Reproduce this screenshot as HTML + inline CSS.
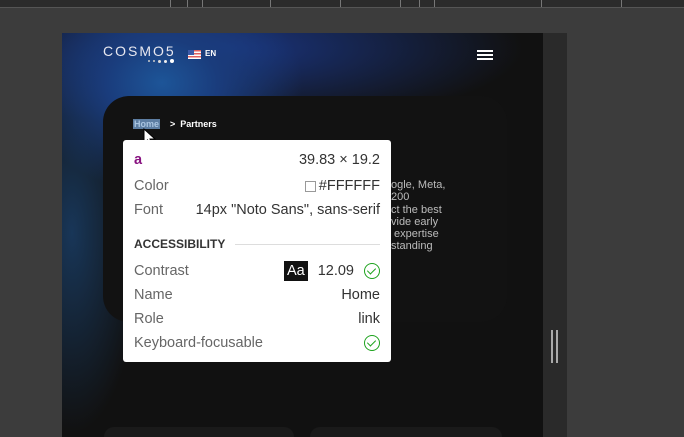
<!DOCTYPE html>
<html><head><style>
*{margin:0;padding:0;box-sizing:border-box}
body{width:684px;height:437px;background:#3c3c3c;position:relative;overflow:hidden;font-family:"Liberation Sans",sans-serif}
.top{position:absolute;left:0;top:0;width:684px;height:8px;background:#2b2b2b;border-bottom:1px solid #555}
.tick{position:absolute;top:0;width:1px;height:7px;background:#777}
.vp{position:absolute;left:62px;top:33px;width:481px;height:404px;background:#111;overflow:hidden}
.glow{position:absolute;left:0;top:0;width:481px;height:404px;background:radial-gradient(ellipse 140px 110px at 100px 50px,#1d5598 0%,#1a3c7c 40%,rgba(17,17,40,0) 100%),radial-gradient(ellipse 300px 80px at 160px 15px,#1a3580,rgba(17,17,30,0) 100%),radial-gradient(ellipse 70px 200px at 10px 200px,#183658,rgba(17,17,17,0) 100%)}
.scroll{position:absolute;left:543px;top:33px;width:24px;height:404px;background:#2a2a2a}
.card{position:absolute;left:41px;top:63px;width:404px;height:226px;background:#121212;border-radius:26px}
.bc{position:absolute;left:71px;top:86px;font-size:9px;color:#fff;font-weight:bold}
.bc .h{background:#5d7ea3;color:#a9c4e0;padding:0 1px}
.txt{position:absolute;left:329px;top:146px;font-size:11px;line-height:12.3px;color:#bbb;white-space:pre}
.tip{position:absolute;left:123px;top:140px;width:268px;height:222px;background:#fff;border-radius:3px;font-family:"Liberation Sans",sans-serif;color:#666;font-size:14.5px}
.r{position:absolute;left:11px;right:11px;display:flex;justify-content:space-between;align-items:center;height:20px}
.chk{width:16px;height:16px;border:1.5px solid #1ea31e;border-radius:50%;position:relative}
.chk:after{content:"";position:absolute;left:4px;top:2px;width:4px;height:7px;border:solid #1ea31e;border-width:0 1.5px 1.5px 0;transform:rotate(45deg)}
.bot{position:absolute;top:394px;height:20px;background:#1a1a1a;border-radius:10px}
</style></head><body>
<div class="top"><div class="tick" style="left:170px"></div><div class="tick" style="left:187px"></div><div class="tick" style="left:202px"></div><div class="tick" style="left:270px"></div><div class="tick" style="left:340px"></div><div class="tick" style="left:400px"></div><div class="tick" style="left:419px"></div><div class="tick" style="left:434px"></div><div class="tick" style="left:541px"></div><div class="tick" style="left:621px"></div></div>
<div class="vp"><div class="glow"></div>
<div style="position:absolute;left:41px;top:10px;color:#e8e8f0;font-size:14px;letter-spacing:2px">COSMO5</div>
<div style="position:absolute;left:86px;top:26px;width:28px;height:4px;display:flex;gap:3px;align-items:center"><i style="width:2px;height:2px;background:#ccc;border-radius:50%"></i><i style="width:2px;height:2px;background:#ccc;border-radius:50%"></i><i style="width:3px;height:3px;background:#ddd;border-radius:50%"></i><i style="width:3px;height:3px;background:#eee;border-radius:50%"></i><i style="width:4px;height:4px;background:#fff;border-radius:50%"></i></div>
<div style="position:absolute;left:126px;top:17px;width:13px;height:9px;background:repeating-linear-gradient(#e06060 0 1.5px,#fff 1.5px 3px)"><div style="width:6px;height:5px;background:#3c5aa8"></div></div>
<div style="position:absolute;left:143px;top:16px;color:#fff;font-size:8px;font-weight:bold">EN</div>
<div style="position:absolute;left:415px;top:17px;width:16px"><div style="height:2px;background:#fff;margin-bottom:2px"></div><div style="height:2px;background:#fff;margin-bottom:2px"></div><div style="height:2px;background:#fff"></div></div>
<div class="card"></div>
<div class="bc"><span class="h">Home</span>&nbsp;&nbsp;&nbsp;&nbsp;&gt;&nbsp;&nbsp;Partners</div>
<div class="txt">ogle, Meta,
200
ct the best
vide early
 expertise
standing</div>
<div class="bot" style="left:42px;width:190px"></div><div class="bot" style="left:248px;width:192px"></div>
</div>
<div class="scroll"><div style="position:absolute;left:8px;top:297px;width:2px;height:33px;background:#aaa"></div><div style="position:absolute;left:13px;top:297px;width:2px;height:33px;background:#aaa"></div></div>
<svg style="position:absolute;left:143px;top:128px" width="14" height="20"><path d="M1 1 L1 15 L4.5 12 L7 18 L9.5 17 L7 11 L12 11 Z" fill="#fff" stroke="#000" stroke-width="1"/></svg>
<div class="tip">
<div class="r" style="top:10px"><span style="color:#881280;font-weight:bold">a</span><span style="color:#333">39.83 × 19.2</span></div>
<div class="r" style="top:36px"><span>Color</span><span style="color:#333;display:flex;align-items:center"><i style="width:11px;height:11px;border:1px solid #999;margin-right:3px"></i>#FFFFFF</span></div>
<div class="r" style="top:60px"><span>Font</span><span style="color:#333">14px "Noto Sans", sans-serif</span></div>
<div class="r" style="top:94px;font-size:12px;font-weight:bold;color:#333"><span>ACCESSIBILITY</span><span style="flex:1;height:1px;background:#ddd;margin-left:10px"></span></div>
<div class="r" style="top:121px"><span>Contrast</span><span style="display:flex;align-items:center;color:#333"><b style="background:#111;color:#fff;font-weight:normal;padding:2px 3px;margin-right:10px">Aa</b>12.09<i class="chk" style="margin-left:10px"></i></span></div>
<div class="r" style="top:145px"><span>Name</span><span style="color:#333">Home</span></div>
<div class="r" style="top:169px"><span>Role</span><span style="color:#333">link</span></div>
<div class="r" style="top:193px"><span>Keyboard-focusable</span><i class="chk"></i></div>
</div>
</body></html>
